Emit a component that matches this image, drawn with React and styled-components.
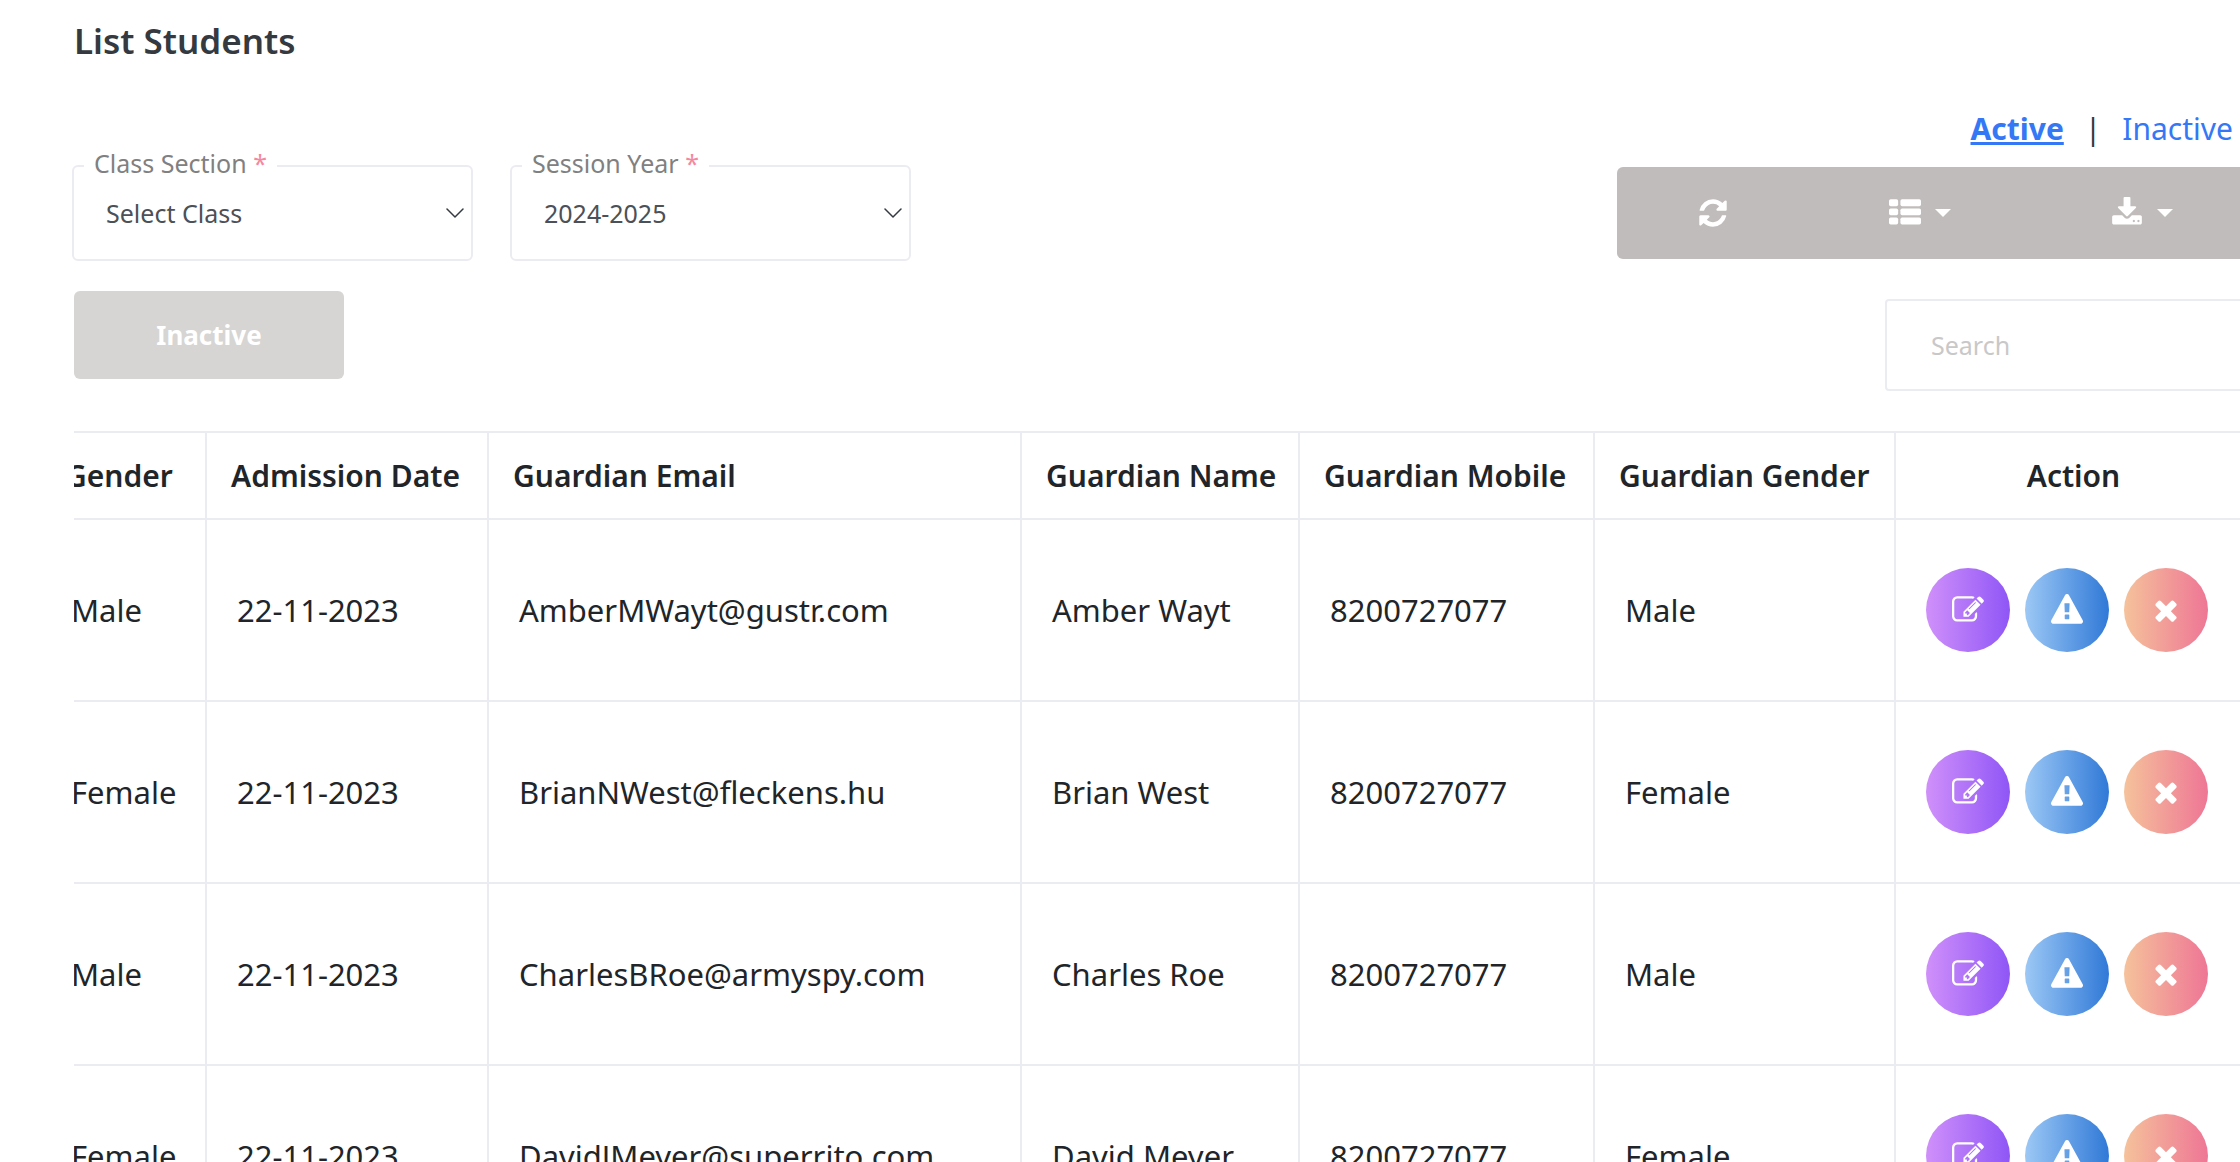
import React from 'react';
import styled, { createGlobalStyle } from 'styled-components';

const border = '#ebebf2';

const GlobalStyle = createGlobalStyle`
  *, *::before, *::after { box-sizing: border-box; }
  html { overflow: hidden auto; scrollbar-width: none; }
  body {
    margin: 0;
    background: #fff;
    color: #343a40;
    font-family: "Noto Sans", "Open Sans", sans-serif;
    font-size: 30px;
  }
  button, input, select { font-family: inherit; }
`;

const Page = styled.main`
  margin-right: -13px;
  padding: 18px 0 0 74px;
`;

const Title = styled.h4`
  margin: 0 0 42px;
  font-size: 35px;
  line-height: 46px;
  font-weight: 600;
`;

const Controls = styled.section`
  display: flex;
  justify-content: space-between;
  align-items: flex-start;
  margin-bottom: 40px;
`;

const FilterColumn = styled.div`
  display: flex;
  flex-direction: column;
  align-items: flex-start;
  gap: 30px;
  padding-top: 42px;
`;

const Filters = styled.div`
  display: flex;
  gap: 37px;
  margin-left: -2px;
`;

const Field = styled.fieldset`
  width: 401px;
  margin: 0;
  padding: 0 0 17px 10px;
  border: 2px solid ${border};
  border-radius: 6px;
`;

const Legend = styled.legend`
  padding: 0 10px 6px;
  font-size: 25px;
  line-height: 30px;
  color: #808080;
`;

const Required = styled.span`
  color: #f5879f;
`;

const SelectBox = styled.div`
  display: grid;
  align-items: center;

  > * { grid-area: 1 / 1; }
  > svg {
    justify-self: end;
    margin-right: 7px;
    pointer-events: none;
  }
`;

const Select = styled.select`
  appearance: none;
  width: 100%;
  height: 58px;
  padding: 0 40px 0 22px;
  border: 0;
  background: transparent;
  font-size: 25px;
  color: #4c5057;
`;

const StatusButton = styled.button`
  width: 270px;
  height: 88px;
  border: 0;
  border-radius: 6px;
  background: #d6d5d3;
  color: #fff;
  font-size: 26px;
  font-weight: 700;
`;

const ToolColumn = styled.div`
  display: flex;
  flex-direction: column;
  align-items: flex-end;
`;

const StatusLinks = styled.nav`
  display: flex;
  gap: 21px;
  margin-bottom: 15px;
  padding-right: 20px;
  line-height: 46px;
`;

const StatusLink = styled.a`
  color: #3478f6;
  font-weight: ${(p) => (p.$current ? 700 : 400)};
  text-decoration: ${(p) => (p.$current ? 'underline' : 'none')};
  text-decoration-thickness: 3px;
  text-underline-offset: 2px;
`;

const Toolbar = styled.div`
  display: flex;
  height: 92px;
  margin-bottom: 40px;
  border-radius: 6px;
  background: #c0bcbb;
`;

const ToolButton = styled.button`
  display: flex;
  align-items: center;
  gap: 14px;
  padding: 0 80px;
  border: 0;
  background: transparent;
  color: #fff;
`;

const SearchInput = styled.input`
  width: 368px;
  height: 92px;
  padding: 0 44px;
  border: 2px solid ${border};
  border-radius: 4px;
  background: #fff;
  color: #4c5057;
  font-size: 25px;

  &::placeholder { color: #c9c8c8; opacity: 1; }
`;

const TableScroll = styled.div`
  overflow: hidden;
`;

const Table = styled.table`
  table-layout: fixed;
  width: calc(100% + 33px);
  min-width: 2100px;
  margin-left: -33px;
  border-spacing: 0;
  border-top: 2px solid ${border};
  color: #212529;
`;

const Col = styled.col`
  width: ${(p) => (p.$width ? `${p.$width}px` : 'auto')};
`;

const HeadCell = styled.th`
  height: 87px;
  padding: 0 24px;
  border: solid ${border};
  border-width: 0 2px 2px 0;
  font-size: 30px;
  font-weight: 600;
  text-align: ${(p) => p.$align || 'left'};
  white-space: nowrap;
`;

const Cell = styled.td`
  height: 182px;
  padding: 0 30px;
  border: solid ${border};
  border-width: 0 2px 2px 0;
  font-size: 31px;
  white-space: nowrap;
`;

const Actions = styled.div`
  display: flex;
  gap: 15px;
`;

const gradients = {
  edit: 'linear-gradient(to right, #d090fa, #8f56f6)',
  warn: 'linear-gradient(to right, #9cc8f5, #3079d7)',
  remove: 'linear-gradient(to right, #f5c29b, #ee7695)',
};

const RoundButton = styled.button`
  display: grid;
  place-items: center;
  width: 84px;
  height: 84px;
  padding: 0;
  border: 0;
  border-radius: 50%;
  background: ${(p) => gradients[p.$kind]};
  color: #fff;
`;

const iconPaths = {
  refresh:
    'M1639 1056q0 5-1 7-64 268-268 434.5t-478 166.5q-146 0-282.5-55t-243.5-157l-129 129q-19 19-45 19t-45-19-19-45v-448q0-26 19-45t45-19h448q26 0 45 19t19 45-19 45l-137 137q71 66 161 102t187 36q134 0 250-65t186-179q11-17 53-117 8-23 30-23h192q13 0 22.5 9.5t9.5 22.5zm25-800v448q0 26-19 45t-45 19h-448q-26 0-45-19t-19-45 19-45l138-138q-148-137-349-137-134 0-250 65t-186 179q-11 17-53 117-8 23-30 23h-199q-13 0-22.5-9.5t-9.5-22.5v-7q65-268 270-434.5t480-166.5q146 0 284 55.5t245 156.5l130-129q19-19 45-19t45 19 19 45z',
  download:
    'M1344 1344q0-26-19-45t-45-19-45 19-19 45 19 45 45 19 45-19 19-45zm256 0q0-26-19-45t-45-19-45 19-19 45 19 45 45 19 45-19 19-45zm128-224v320q0 40-28 68t-68 28h-1472q-40 0-68-28t-28-68v-320q0-40 28-68t68-28h465l135 136q58 56 136 56t136-56l136-136h464q40 0 68 28t28 68zm-325-569q17 41-14 70l-448 448q-18 19-45 19t-45-19l-448-448q-31-29-14-70 17-39 59-39h256v-448q0-26 19-45t45-19h256q26 0 45 19t19 45v448h256q42 0 59 39z',
  edit:
    'M888 1184l116-116-152-152-116 116v56h96v96h56zm440-720q-16-16-33 1l-350 350q-17 17-1 33t33-1l350-350q17-17 1-33zm80 594v190q0 119-84.5 203.5t-203.5 84.5h-832q-119 0-203.5-84.5t-84.5-203.5v-832q0-119 84.5-203.5t203.5-84.5h832q63 0 117 25 15 7 18 23 3 17-9 29l-49 49q-14 14-32 8-23-6-45-6h-832q-66 0-113 47t-47 113v832q0 66 47 113t113 47h832q66 0 113-47t47-113v-126q0-13 9-22l64-64q15-15 35-7t20 29zm-96-738l288 288-672 672h-288v-288zm444 132l-92 92-288-288 92-92q28-28 68-28t68 28l152 152q28 28 28 68t-28 68z',
  warn:
    'M1024 1375v-190q0-14-9.5-23.5t-22.5-9.5h-192q-13 0-22.5 9.5t-9.5 23.5v190q0 14 9.5 23.5t22.5 9.5h192q13 0 22.5-9.5t9.5-23.5zm-2-374l18-459q0-12-10-19-13-11-24-11h-220q-11 0-24 11-10 7-10 21l17 457q0 10 10 16.5t24 6.5h185q14 0 23.5-6.5t10.5-16.5zm-14-934l768 1408q35 63-2 126-17 29-46.5 46t-63.5 17h-1536q-34 0-63.5-17t-46.5-46q-37-63-2-126l768-1408q17-31 47-49t65-18 65 18 47 49z',
  remove:
    'M1490 1322q0 40-28 68l-136 136q-28 28-68 28t-68-28l-294-294-294 294q-28 28-68 28t-68-28l-136-136q-28-28-28-68t28-68l294-294-294-294q-28-28-28-68t28-68l136-136q28-28 68-28t68 28l294 294 294-294q28-28 68-28t68 28l136 136q28 28 28 68t-28 68l-294 294 294 294q28 28 28 68z',
};

function Icon({ name }) {
  return (
    <svg width="32" height="32" viewBox="0 0 1792 1792" fill="currentColor" aria-hidden="true">
      <path d={iconPaths[name]} />
    </svg>
  );
}

function ListIcon() {
  return (
    <svg width="32" height="32" viewBox="0 0 1792 1792" fill="currentColor" aria-hidden="true">
      {[128, 640, 1152].map((y) => (
        <g key={y}>
          <rect x="0" y={y} width="512" height="384" rx="96" />
          <rect x="640" y={y} width="1152" height="384" rx="96" />
        </g>
      ))}
    </svg>
  );
}

function Caret() {
  return (
    <svg width="16" height="8" viewBox="0 0 16 8" fill="currentColor" aria-hidden="true">
      <path d="M0 0h16L8 8z" />
    </svg>
  );
}

function Chevron() {
  return (
    <svg width="18" height="10" viewBox="0 0 18 10" fill="none" stroke="#343a40" strokeWidth="1.5" strokeLinecap="round" strokeLinejoin="round" aria-hidden="true">
      <path d="M1 1l8 8 8-8" />
    </svg>
  );
}

function SelectField({ id, label, value }) {
  return (
    <Field>
      <Legend>
        <label htmlFor={id}>
          {label} <Required>*</Required>
        </label>
      </Legend>
      <SelectBox>
        <Select id={id} defaultValue={value}>
          <option>{value}</option>
        </Select>
        <Chevron />
      </SelectBox>
    </Field>
  );
}

const columns = [
  { label: 'Gender', width: 166 },
  { label: 'Admission Date', width: 282 },
  { label: 'Guardian Email' },
  { label: 'Guardian Name', width: 278 },
  { label: 'Guardian Mobile', width: 295 },
  { label: 'Guardian Gender', width: 301 },
  { label: 'Action', width: 357, align: 'center' },
];

const students = [
  ['Male', '22-11-2023', 'AmberMWayt@gustr.com', 'Amber Wayt', '8200727077', 'Male'],
  ['Female', '22-11-2023', 'BrianNWest@fleckens.hu', 'Brian West', '8200727077', 'Female'],
  ['Male', '22-11-2023', 'CharlesBRoe@armyspy.com', 'Charles Roe', '8200727077', 'Male'],
  ['Female', '22-11-2023', 'DavidJMeyer@superrito.com', 'David Meyer', '8200727077', 'Female'],
];

export default function App() {
  return (
    <>
      <GlobalStyle />
      <Page>
        <Title>List Students</Title>
        <Controls>
          <FilterColumn>
            <Filters>
              <SelectField id="class-section" label="Class Section" value="Select Class" />
              <SelectField id="session-year" label="Session Year" value="2024-2025" />
            </Filters>
            <StatusButton type="button">Inactive</StatusButton>
          </FilterColumn>
          <ToolColumn>
            <StatusLinks>
              <StatusLink href="#active" $current>Active</StatusLink>
              <span>|</span>
              <StatusLink href="#inactive">Inactive</StatusLink>
            </StatusLinks>
            <Toolbar>
              <ToolButton type="button" aria-label="Refresh">
                <Icon name="refresh" />
              </ToolButton>
              <ToolButton type="button" aria-label="Columns">
                <ListIcon />
                <Caret />
              </ToolButton>
              <ToolButton type="button" aria-label="Export">
                <Icon name="download" />
                <Caret />
              </ToolButton>
            </Toolbar>
            <SearchInput type="search" placeholder="Search" aria-label="Search" />
          </ToolColumn>
        </Controls>
        <TableScroll>
          <Table>
            <colgroup>
              {columns.map((c) => (
                <Col key={c.label} $width={c.width} />
              ))}
            </colgroup>
            <thead>
              <tr>
                {columns.map((c) => (
                  <HeadCell key={c.label} scope="col" $align={c.align}>{c.label}</HeadCell>
                ))}
              </tr>
            </thead>
            <tbody>
              {students.map((row) => (
                <tr key={row[2]}>
                  {row.map((value, i) => (
                    <Cell key={columns[i].label}>{value}</Cell>
                  ))}
                  <Cell>
                    <Actions>
                      <RoundButton type="button" $kind="edit" aria-label="Edit">
                        <Icon name="edit" />
                      </RoundButton>
                      <RoundButton type="button" $kind="warn" aria-label="Deactivate">
                        <Icon name="warn" />
                      </RoundButton>
                      <RoundButton type="button" $kind="remove" aria-label="Delete">
                        <Icon name="remove" />
                      </RoundButton>
                    </Actions>
                  </Cell>
                </tr>
              ))}
            </tbody>
          </Table>
        </TableScroll>
      </Page>
    </>
  );
}
